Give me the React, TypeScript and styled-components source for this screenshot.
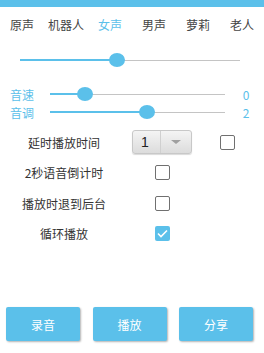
import React from 'react';
import styled, { createGlobalStyle } from 'styled-components';

const GlobalStyle = createGlobalStyle`
  html, body {
    margin: 0;
    padding: 0;
    background: #ffffff;
  }
  body {
    font-family: "Noto Sans CJK SC", "Noto Sans", sans-serif;
  }
`;

const BLUE = '#5bc0ea';

// #region Styled
const Page = styled.div`
  width: 264px;
  height: 353px;
  display: flex;
  flex-direction: column;
  overflow: hidden;
  background: #fff;
`;

const TopBar = styled.div`
  height: 7px;
  background: ${BLUE};
`;

const Tabs = styled.div`
  display: grid;
  grid-template-columns: repeat(6, 44px);
  height: 36px;
  align-items: center;
`;

const Tab = styled.div<{ $active?: boolean }>`
  text-align: center;
  font-size: 12px;
  line-height: 14px;
  color: ${(p) => (p.$active ? BLUE : '#444')};
`;

const MainSliderRow = styled.div`
  padding: 0 24px 0 20px;
  height: 34px;
  display: flex;
  align-items: center;
`;

const TrackWrap = styled.div`
  position: relative;
  flex: 1;
  height: 16px;
  display: flex;
  align-items: center;
`;

const TrackBase = styled.div`
  flex: 1;
  height: 1px;
  background: #c4c4c4;
  position: relative;
`;

const TrackFill = styled.div`
  position: absolute;
  left: 0;
  top: -0.5px;
  height: 2px;
  background: ${BLUE};
`;

const Thumb = styled.div<{ $w: number; $h: number }>`
  position: absolute;
  top: 50%;
  width: ${(p) => p.$w}px;
  height: ${(p) => p.$h}px;
  margin-left: ${(p) => -p.$w / 2}px;
  margin-top: ${(p) => -p.$h / 2}px;
  border-radius: 50%;
  background: ${BLUE};
`;

const ParamList = styled.div`
  display: flex;
  flex-direction: column;
  padding-top: 8px;
`;

const ParamRow = styled.div`
  height: 18px;
  display: flex;
  align-items: center;
  padding-left: 10px;
`;

const ParamLabel = styled.div`
  width: 40px;
  font-size: 12px;
  color: ${BLUE};
`;

const ParamTrack = styled.div`
  width: 175px;
  display: flex;
`;

const ParamValue = styled.div`
  flex: 1;
  text-align: center;
  font-size: 12px;
  color: ${BLUE};
  padding-left: 3px;
`;

const Options = styled.div`
  display: flex;
  flex-direction: column;
  padding-top: 6px;
`;

const OptionRow = styled.div`
  display: grid;
  grid-template-columns: 128px 68px 62px;
  align-items: center;
  height: 30.5px;
`;

const OptionLabel = styled.div`
  text-align: center;
  font-size: 12px;
  color: #333;
`;

const Cell = styled.div`
  display: flex;
  justify-content: center;
  align-items: center;
`;

const Spinner = styled.div`
  width: 60px;
  height: 24px;
  box-sizing: border-box;
  border: 1px solid #c8c8c8;
  border-radius: 3px;
  background: linear-gradient(#f4f4f4, #dcdcdc);
  box-shadow: 0 1px 1px rgba(0, 0, 0, 0.15);
  display: flex;
`;

const SpinnerValue = styled.div`
  width: 28px;
  border-right: 1px solid #d0d0d0;
  font-family: "Liberation Sans", sans-serif;
  font-size: 14px;
  line-height: 22px;
  color: #222;
  padding-left: 8px;
  box-sizing: border-box;
`;

const SpinnerArrow = styled.div`
  flex: 1;
  display: flex;
  justify-content: center;
  align-items: center;
  &::after {
    content: '';
    border-left: 5px solid transparent;
    border-right: 5px solid transparent;
    border-top: 4px solid #a0a0a0;
  }
`;

const Box = styled.div<{ $checked?: boolean }>`
  width: 15px;
  height: 15px;
  box-sizing: border-box;
  border-radius: 2px;
  border: ${(p) => (p.$checked ? 'none' : '1.5px solid #707070')};
  background: ${(p) => (p.$checked ? BLUE : '#fff')};
  display: flex;
  align-items: center;
  justify-content: center;
`;

const Footer = styled.div`
  margin-top: auto;
  padding: 0 11px 12px 6px;
  display: flex;
  justify-content: space-between;
`;

const ActionButton = styled.button`
  width: 74px;
  height: 34px;
  border: none;
  border-radius: 2px;
  background: ${BLUE};
  color: #fff;
  font-family: "Noto Sans CJK SC", sans-serif;
  font-size: 12px;
  box-shadow: 1px 1px 2px rgba(0, 0, 0, 0.3);
  padding: 0;
`;
// #endregion

type SliderProps = { value: number; thumbW: number; thumbH: number };

const Slider = ({ value, thumbW, thumbH }: SliderProps) => (
  <TrackWrap>
    <TrackBase>
      <TrackFill style={{ width: `${value * 100}%` }} />
    </TrackBase>
    <Thumb $w={thumbW} $h={thumbH} style={{ left: `${value * 100}%` }} />
  </TrackWrap>
);

const Check = ({ checked }: { checked?: boolean }) => (
  <Box $checked={checked}>
    {checked && (
      <svg width="11" height="9" viewBox="0 0 11 9">
        <path d="M1 4.5 L4 7.5 L10 1.5" fill="none" stroke="#fff" strokeWidth="1.6" />
      </svg>
    )}
  </Box>
);

const voices = ['原声', '机器人', '女声', '男声', '萝莉', '老人'];

export default function App() {
  return (
    <Page>
      <GlobalStyle />
      <TopBar />
      <Tabs>
        {voices.map((v) => (
          <Tab key={v} $active={v === '女声'}>
            {v}
          </Tab>
        ))}
      </Tabs>
      <MainSliderRow>
        <Slider value={0.44} thumbW={16} thumbH={14} />
      </MainSliderRow>
      <ParamList>
        <ParamRow>
          <ParamLabel>音速</ParamLabel>
          <ParamTrack>
            <Slider value={0.2} thumbW={16} thumbH={14} />
          </ParamTrack>
          <ParamValue>0</ParamValue>
        </ParamRow>
        <ParamRow>
          <ParamLabel>音调</ParamLabel>
          <ParamTrack>
            <Slider value={0.555} thumbW={16} thumbH={14} />
          </ParamTrack>
          <ParamValue>2</ParamValue>
        </ParamRow>
      </ParamList>
      <Options>
        <OptionRow>
          <OptionLabel>延时播放时间</OptionLabel>
          <Cell>
            <Spinner>
              <SpinnerValue>1</SpinnerValue>
              <SpinnerArrow />
            </Spinner>
          </Cell>
          <Cell>
            <Check />
          </Cell>
        </OptionRow>
        <OptionRow>
          <OptionLabel>2秒语音倒计时</OptionLabel>
          <Cell>
            <Check />
          </Cell>
        </OptionRow>
        <OptionRow>
          <OptionLabel>播放时退到后台</OptionLabel>
          <Cell>
            <Check />
          </Cell>
        </OptionRow>
        <OptionRow>
          <OptionLabel>循环播放</OptionLabel>
          <Cell>
            <Check checked />
          </Cell>
        </OptionRow>
      </Options>
      <Footer>
        <ActionButton>录音</ActionButton>
        <ActionButton>播放</ActionButton>
        <ActionButton>分享</ActionButton>
      </Footer>
    </Page>
  );
}
